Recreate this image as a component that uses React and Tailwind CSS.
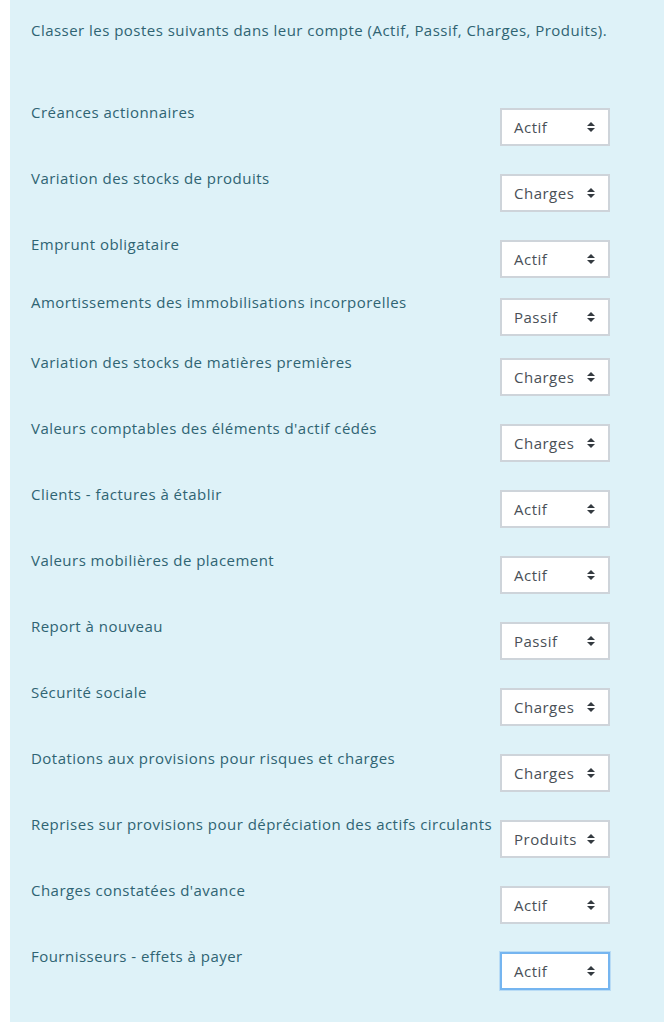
const rows = [
  ['Créances actionnaires', 'Actif', 66],
  ['Variation des stocks de produits', 'Charges', 66],
  ['Emprunt obligataire', 'Actif', 58],
  ['Amortissements des immobilisations incorporelles', 'Passif', 60],
  ['Variation des stocks de matières premières', 'Charges', 66],
  ["Valeurs comptables des éléments d'actif cédés", 'Charges', 66],
  ['Clients - factures à établir', 'Actif', 66],
  ['Valeurs mobilières de placement', 'Actif', 66],
  ['Report à nouveau', 'Passif', 66],
  ['Sécurité sociale', 'Charges', 66],
  ['Dotations aux provisions pour risques et charges', 'Charges', 66],
  ['Reprises sur provisions pour dépréciation des actifs circulants', 'Produits', 66],
  ["Charges constatées d'avance", 'Actif', 66],
  ['Fournisseurs - effets à payer', 'Actif', 66],
];

const font = { fontFamily: '"Open Sans", "Noto Sans", sans-serif' };

const Arrows = () => (
  <svg width="8" height="10" viewBox="0 0 8 10" className="shrink-0 text-[#343a40]">
    <path d="M4 0 L8 4 L0 4 Z" fill="currentColor" />
    <path d="M0 6 L8 6 L4 10 Z" fill="currentColor" />
  </svg>
);

const Select = ({ value, focused }) => (
  <div
    className={
      'mt-[7px] w-[110px] h-[38px] shrink-0 bg-white flex items-center justify-between pl-[12px] pr-[13px] pb-[1px] text-[15px] tracking-[0.5px] text-[#495057] ' +
      (focused
        ? 'border-2 border-[#75b5f0] shadow-[0_0_0_1px_rgba(117,181,240,0.35)]'
        : 'border-2 border-[#ced4da]')
    }
    style={font}
  >
    <span>{value}</span>
    <Arrows />
  </div>
);

export default function App() {
  return (
    <div className="min-h-screen bg-white">
      <div
        className="ml-[10px] bg-[#def2f8] text-[#2f6473] pt-[19px] pb-[11px] pl-[21px] text-[15px] leading-[22px] tracking-[0.47px]"
        style={font}
      >
        <p className="mb-[60px]">
          Classer les postes suivants dans leur compte (Actif, Passif, Charges, Produits).
        </p>
        {rows.map(([label, value, h], i) => (
          <div key={label} className="flex items-start" style={{ height: h }}>
            <div className="w-[469px] shrink-0 whitespace-nowrap">{label}</div>
            <Select value={value} focused={i === rows.length - 1} />
          </div>
        ))}
      </div>
    </div>
  );
}
